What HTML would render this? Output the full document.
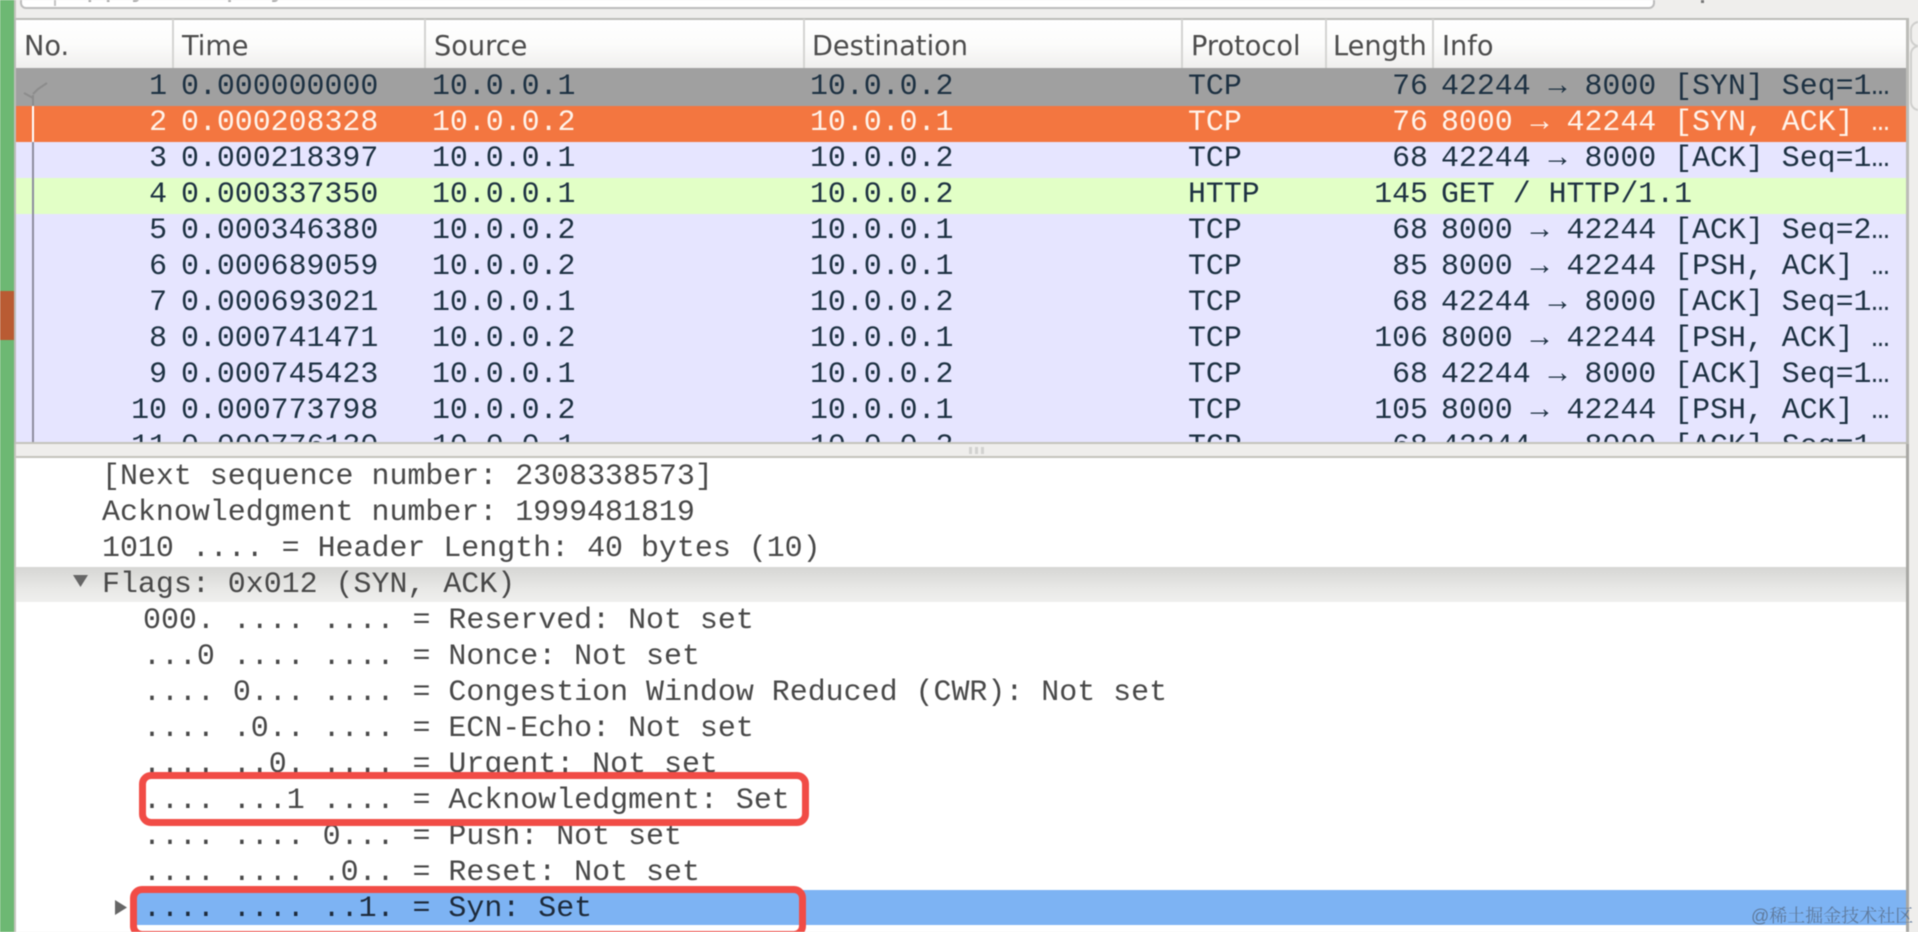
<!DOCTYPE html>
<html><head><meta charset="utf-8"><style>
html,body{margin:0;padding:0;width:1918px;height:932px;overflow:hidden;background:#efeeec}
#r{position:absolute;left:0;top:0;width:1918px;height:932px;overflow:hidden;filter:blur(.55px);background:#efeeec}
#r div{position:absolute}
.t{font-family:"Liberation Mono",monospace;font-size:29.9px;line-height:36px;height:36px;white-space:pre}
.h{font-family:"DejaVu Sans","Liberation Sans",sans-serif;font-size:27.2px;line-height:36px;top:29px;color:#4c4c4c;white-space:pre}
.s{top:19px;width:2px;height:49px;background:#d4d4d2}
.d{font-family:"Liberation Mono",monospace;font-size:29.95px;line-height:36px;height:36px;white-space:pre;color:#484848}
.row{left:0;width:1890px}
.c{color:#1d3142}.w{color:#fff3ea}
</style></head><body><div id="r">
<!-- left strip -->
<div style="left:0;top:0;width:14px;height:932px;background:#6db873"></div>
<div style="left:0;top:291px;width:14px;height:49px;background:#b95b33"></div>
<div style="left:14px;top:0;width:2px;height:932px;background:#c4c4bc"></div>
<!-- filter -->
<div style="left:20px;top:-10px;width:1631px;height:15px;background:#fff;border:2px solid #bcbcbc;border-radius:6px;overflow:hidden"></div>
<div style="left:54px;top:0;width:2px;height:6px;background:#c4c4c4"></div>
<div style="left:66px;top:-32px;font-family:'DejaVu Sans',sans-serif;font-size:29px;line-height:36px;color:#aaa;white-space:pre;height:36px">Apply a display filter … &lt;Ctrl-/&gt;</div>
<div style="left:1701px;top:0;width:3px;height:3px;background:#777"></div>
<!-- right border and widgets -->
<div style="left:1910px;top:21px;width:14px;height:22px;border:2px solid #cfcfcd;border-radius:9px;background:#f1f0ee"></div>
<div style="left:1910px;top:45px;width:14px;height:62px;border:2px solid #cfcfcd;border-radius:9px;background:#f1f0ee"></div>
<!-- packet list -->
<div style="left:14px;top:18px;width:1895px;height:426px;background:#bcbcb8"></div>
<div style="left:16px;top:20px;width:1890px;height:48px;background:linear-gradient(#fff 0%,#fcfcfb 50%,#f0efee 100%)"></div>
<div class="s" style="left:172px"></div><div class="s" style="left:424px"></div><div class="s" style="left:803px"></div><div class="s" style="left:1181px"></div><div class="s" style="left:1325px"></div><div class="s" style="left:1432px"></div>
<div class="h" style="left:24px">No.</div><div class="h" style="left:182px">Time</div><div class="h" style="left:434px">Source</div><div class="h" style="left:812px">Destination</div><div class="h" style="left:1191px">Protocol</div><div class="h" style="left:1333px;width:98px;overflow:hidden">Length</div><div class="h" style="left:1442px">Info</div>
<div style="left:16px;top:68px;width:1890px;height:374px;overflow:hidden;background:#e6e5ff">
 <div style="left:0;top:0;width:1890px;height:38px;background:#a0a0a0"></div>
 <div style="left:0;top:38px;width:1890px;height:36px;background:#f37640"></div>
 <div style="left:0;top:110px;width:1890px;height:36px;background:#e2ffc6"></div>
 <div style="left:16px;top:38px;width:2px;height:36px;background:#fff"></div>
 <div style="left:16px;top:74px;width:2px;height:300px;background:#8d8d9e"></div>
</div>
<svg style="position:absolute;left:16px;top:68px" width="40" height="38" fill="none" stroke="#8c8c8c" stroke-width="2"><path d="M17 38V27"/><path d="M17 26L22 21Q25 19 31 15"/><path d="M8 25L17 30"/></svg>
<div style="left:16px;top:68px;width:1890px;height:374px;overflow:hidden" id="pl">
<div class="t c row" style="top:0"><div style="right:1739px">1</div><div style="left:165px">0.000000000</div><div style="left:416px">10.0.0.1</div><div style="left:794px">10.0.0.2</div><div style="left:1172px">TCP</div><div style="right:478px">76</div><div style="left:1425px">42244 → 8000 [SYN] Seq=1…</div></div>
<div class="t w row" style="top:36px"><div style="right:1739px">2</div><div style="left:165px">0.000208328</div><div style="left:416px">10.0.0.2</div><div style="left:794px">10.0.0.1</div><div style="left:1172px">TCP</div><div style="right:478px">76</div><div style="left:1425px">8000 → 42244 [SYN, ACK] …</div></div>
<div class="t c row" style="top:72px"><div style="right:1739px">3</div><div style="left:165px">0.000218397</div><div style="left:416px">10.0.0.1</div><div style="left:794px">10.0.0.2</div><div style="left:1172px">TCP</div><div style="right:478px">68</div><div style="left:1425px">42244 → 8000 [ACK] Seq=1…</div></div>
<div class="t c row" style="top:108px"><div style="right:1739px">4</div><div style="left:165px">0.000337350</div><div style="left:416px">10.0.0.1</div><div style="left:794px">10.0.0.2</div><div style="left:1172px">HTTP</div><div style="right:478px">145</div><div style="left:1425px">GET / HTTP/1.1</div></div>
<div class="t c row" style="top:144px"><div style="right:1739px">5</div><div style="left:165px">0.000346380</div><div style="left:416px">10.0.0.2</div><div style="left:794px">10.0.0.1</div><div style="left:1172px">TCP</div><div style="right:478px">68</div><div style="left:1425px">8000 → 42244 [ACK] Seq=2…</div></div>
<div class="t c row" style="top:180px"><div style="right:1739px">6</div><div style="left:165px">0.000689059</div><div style="left:416px">10.0.0.2</div><div style="left:794px">10.0.0.1</div><div style="left:1172px">TCP</div><div style="right:478px">85</div><div style="left:1425px">8000 → 42244 [PSH, ACK] …</div></div>
<div class="t c row" style="top:216px"><div style="right:1739px">7</div><div style="left:165px">0.000693021</div><div style="left:416px">10.0.0.1</div><div style="left:794px">10.0.0.2</div><div style="left:1172px">TCP</div><div style="right:478px">68</div><div style="left:1425px">42244 → 8000 [ACK] Seq=1…</div></div>
<div class="t c row" style="top:252px"><div style="right:1739px">8</div><div style="left:165px">0.000741471</div><div style="left:416px">10.0.0.2</div><div style="left:794px">10.0.0.1</div><div style="left:1172px">TCP</div><div style="right:478px">106</div><div style="left:1425px">8000 → 42244 [PSH, ACK] …</div></div>
<div class="t c row" style="top:288px"><div style="right:1739px">9</div><div style="left:165px">0.000745423</div><div style="left:416px">10.0.0.1</div><div style="left:794px">10.0.0.2</div><div style="left:1172px">TCP</div><div style="right:478px">68</div><div style="left:1425px">42244 → 8000 [ACK] Seq=1…</div></div>
<div class="t c row" style="top:324px"><div style="right:1739px">10</div><div style="left:165px">0.000773798</div><div style="left:416px">10.0.0.2</div><div style="left:794px">10.0.0.1</div><div style="left:1172px">TCP</div><div style="right:478px">105</div><div style="left:1425px">8000 → 42244 [PSH, ACK] …</div></div>
<div class="t c row" style="top:360px"><div style="right:1739px">11</div><div style="left:165px">0.000776130</div><div style="left:416px">10.0.0.1</div><div style="left:794px">10.0.0.2</div><div style="left:1172px">TCP</div><div style="right:478px">68</div><div style="left:1425px">42244 → 8000 [ACK] Seq=1…</div></div>
</div>
<!-- splitter -->
<div style="left:16px;top:442px;width:1890px;height:2px;background:#c4c4bc"></div>
<div style="left:16px;top:444px;width:1893px;height:12px;background:#efeeec"></div>
<div style="left:969px;top:447px;width:3px;height:7px;background:#d2d2d0"></div><div style="left:975px;top:447px;width:3px;height:7px;background:#d2d2d0"></div><div style="left:981px;top:447px;width:3px;height:7px;background:#d2d2d0"></div>
<div style="left:14px;top:456px;width:1895px;height:2px;background:#c4c4bc"></div>
<!-- detail -->
<div style="left:16px;top:458px;width:1890px;height:474px;background:#fff"></div>
<div style="left:1906px;top:444px;width:3px;height:488px;background:#a8a8a4"></div>
<div style="left:1906px;top:18px;width:3px;height:426px;background:#bcbcb8"></div>
<div style="left:16px;top:567px;width:1890px;height:35px;background:linear-gradient(#d6d6d4,#e8e8e6 60%,#efefee)"></div>
<div style="left:133px;top:890px;width:1773px;height:35px;background:#7db3f3"></div>
<div class="d" style="left:102px;top:458px">[Next sequence number: 2308338573]</div>
<div class="d" style="left:102px;top:494px">Acknowledgment number: 1999481819</div>
<div class="d" style="left:102px;top:530px">1010 .... = Header Length: 40 bytes (10)</div>
<svg style="position:absolute;left:72px;top:574px" width="18" height="14"><path d="M1 1H16L8.5 13Z" fill="#666"/></svg>
<div class="d" style="left:102px;top:566px">Flags: 0x012 (SYN, ACK)</div>
<div class="d" style="left:143px;top:602px">000. .... .... = Reserved: Not set</div>
<div class="d" style="left:143px;top:638px">...0 .... .... = Nonce: Not set</div>
<div class="d" style="left:143px;top:674px">.... 0... .... = Congestion Window Reduced (CWR): Not set</div>
<div class="d" style="left:143px;top:710px">.... .0.. .... = ECN-Echo: Not set</div>
<div class="d" style="left:143px;top:746px">.... ..0. .... = Urgent: Not set</div>
<div class="d" style="left:143px;top:782px">.... ...1 .... = Acknowledgment: Set</div>
<div class="d" style="left:143px;top:818px">.... .... 0... = Push: Not set</div>
<div class="d" style="left:143px;top:854px">.... .... .0.. = Reset: Not set</div>
<svg style="position:absolute;left:114px;top:899px" width="14" height="18"><path d="M1 1L13 8.5L1 16Z" fill="#666"/></svg>
<div class="d" style="left:143px;top:890px;color:#1d2a3a">.... .... ..1. = Syn: Set</div>
<!-- red boxes -->
<div style="left:139px;top:772px;width:656px;height:40px;border:7px solid #f14c46;border-radius:12px"></div>
<div style="left:130px;top:886px;width:662px;height:38px;border:7px solid #f14c46;border-radius:12px"></div>
<!-- watermark -->
<div style="left:1751px;top:903px;font-family:'Liberation Sans','Noto Serif CJK SC',sans-serif;font-size:18px;line-height:26px;color:#5f7a9c;white-space:pre">@稀土掘金技术社区</div>
</div></body></html>
